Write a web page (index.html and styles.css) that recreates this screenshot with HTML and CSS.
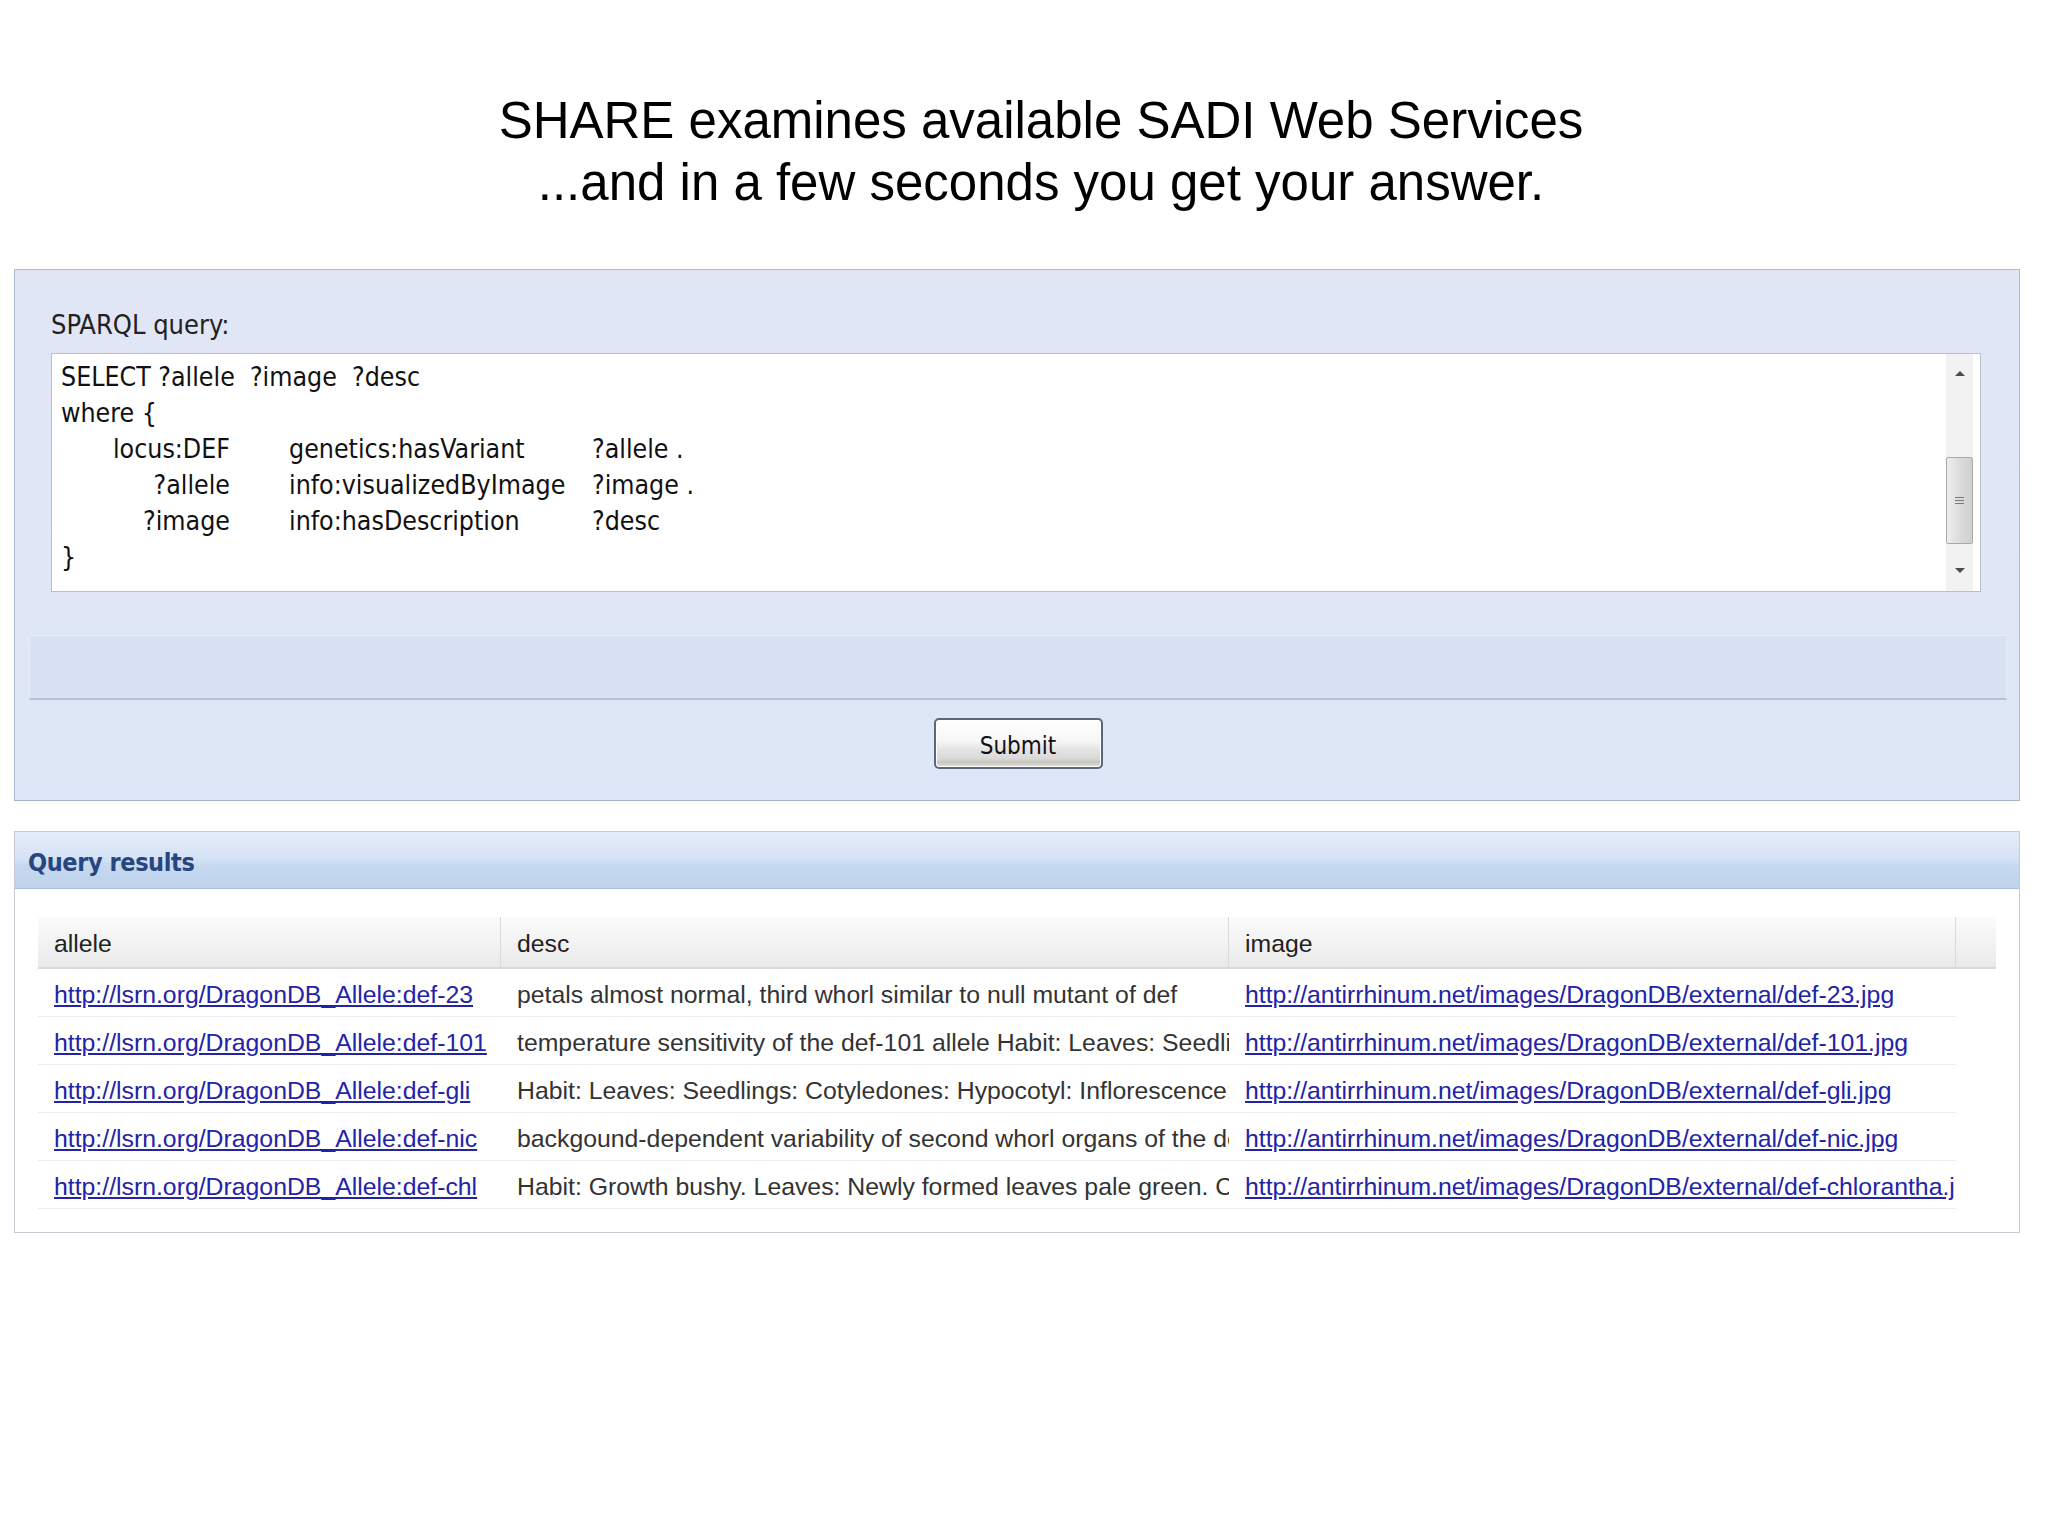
FILE: index.html
```html
<!DOCTYPE html>
<html lang="en">
<head>
<meta charset="utf-8">
<title>SHARE - SADI query</title>
<link rel="stylesheet" href="styles.css">
</head>
<body>
<div class="page">
  <h1 class="title">SHARE examines available SADI Web Services<br>...and in a few seconds you get your answer.</h1>

  <section class="query-panel">
    <div class="query-field">
      <div class="label">SPARQL query:</div>
      <div class="textarea">
        <div class="code">
          <div class="line">SELECT ?allele  ?image  ?desc</div>
          <div class="line">where {</div>
          <div class="triple"><span class="s">locus:DEF</span><span class="p">genetics:hasVariant</span><span class="o">?allele .</span></div>
          <div class="triple"><span class="s">?allele</span><span class="p">info:visualizedByImage</span><span class="o">?image .</span></div>
          <div class="triple"><span class="s">?image</span><span class="p">info:hasDescription</span><span class="o">?desc</span></div>
          <div class="line">}</div>
        </div>
        <div class="scrollbar">
          <div class="sb-btn"><span class="arrow-up"></span></div>
          <div class="sb-track-top"></div>
          <div class="sb-thumb"><span class="grip"></span><span class="grip"></span><span class="grip"></span></div>
          <div class="sb-track-bottom"></div>
          <div class="sb-btn sb-btn-down"><span class="arrow-down"></span></div>
        </div>
      </div>
    </div>
    <div class="band"></div>
    <div class="actions"><button class="submit" type="button">Submit</button></div>
  </section>

  <section class="results">
    <div class="results-header">Query results</div>
    <div class="results-body">
      <div class="grid">
        <div class="th">allele</div>
        <div class="th">desc</div>
        <div class="th">image</div>
        <div class="th th-spacer"></div>

        <div class="td"><a href="#">http://lsrn.org/DragonDB_Allele:def-23</a></div>
        <div class="td">petals almost normal, third whorl similar to null mutant of def</div>
        <div class="td"><a href="#">http://antirrhinum.net/images/DragonDB/external/def-23.jpg</a></div>
        <div class="td-spacer"></div>

        <div class="td"><a href="#">http://lsrn.org/DragonDB_Allele:def-101</a></div>
        <div class="td">temperature sensitivity of the def-101 allele Habit: Leaves: Seedlings: Cotyledones</div>
        <div class="td"><a href="#">http://antirrhinum.net/images/DragonDB/external/def-101.jpg</a></div>
        <div class="td-spacer"></div>

        <div class="td"><a href="#">http://lsrn.org/DragonDB_Allele:def-gli</a></div>
        <div class="td">Habit: Leaves: Seedlings: Cotyledones: Hypocotyl: Inflorescence: Flower</div>
        <div class="td"><a href="#">http://antirrhinum.net/images/DragonDB/external/def-gli.jpg</a></div>
        <div class="td-spacer"></div>

        <div class="td"><a href="#">http://lsrn.org/DragonDB_Allele:def-nic</a></div>
        <div class="td">backgound-dependent variability of second whorl organs of the def-nic allele</div>
        <div class="td"><a href="#">http://antirrhinum.net/images/DragonDB/external/def-nic.jpg</a></div>
        <div class="td-spacer"></div>

        <div class="td"><a href="#">http://lsrn.org/DragonDB_Allele:def-chl</a></div>
        <div class="td">Habit: Growth bushy. Leaves: Newly formed leaves pale green. Cotyledones</div>
        <div class="td"><a href="#">http://antirrhinum.net/images/DragonDB/external/def-chlorantha.jpg</a></div>
        <div class="td-spacer"></div>
      </div>
    </div>
  </section>
</div>
</body>
</html>
```

FILE: styles.css
```css
html, body {
  margin: 0;
  padding: 0;
  background: #ffffff;
}

.page {
  padding: 0 28px 0 14px;
}

.title {
  margin: 0;
  padding: 90px 0 0 48px;
  text-align: center;
  font-family: "Liberation Sans", Arial, sans-serif;
  font-weight: normal;
  font-size: 51px;
  line-height: 62px;
  color: #000000;
}

/* ---------- Query panel ---------- */
.query-panel {
  margin-top: 55px;
  border: 1px solid #aebbd3;
  border-bottom-color: #a3b1ca;
  background: linear-gradient(#e1e6f5, #dee7f7);
  padding: 39px 12px 31px 14px;
  font-family: "DejaVu Sans Condensed", "DejaVu Sans", sans-serif;
  font-stretch: condensed;
}

.query-field {
  margin: 0 26px 0 22px;
}

.label {
  font-size: 27px;
  line-height: 32px;
  color: #222222;
}

.textarea {
  margin-top: 12px;
  height: 237px;
  border: 1px solid #b9c0c9;
  background: #ffffff;
  display: flex;
}

.code {
  flex: 1;
  padding: 5px 0 0 9px;
  font-size: 26.5px;
  line-height: 36px;
  color: #111111;
}

.line {
  white-space: pre;
}

.triple {
  display: grid;
  grid-template-columns: 169px 362px auto;
  white-space: pre;
}

.triple .s {
  text-align: right;
}

.triple .p {
  padding-left: 59px;
}

/* scrollbar */
.scrollbar {
  width: 27px;
  margin-right: 7px;
  background: #f2f2f2;
  display: flex;
  flex-direction: column;
}

.sb-btn {
  height: 38px;
  display: flex;
  align-items: center;
  justify-content: center;
}

.sb-btn-down {
  height: 41px;
}

.arrow-up {
  width: 0;
  height: 0;
  border-left: 5px solid transparent;
  border-right: 5px solid transparent;
  border-bottom: 5px solid #4b4b4b;
}

.arrow-down {
  width: 0;
  height: 0;
  border-left: 5px solid transparent;
  border-right: 5px solid transparent;
  border-top: 5px solid #4b4b4b;
}

.sb-track-top {
  height: 65px;
}

.sb-track-bottom {
  height: 6px;
}

.sb-thumb {
  height: 85px;
  border: 1px solid #a9a9a9;
  border-radius: 2px;
  background: linear-gradient(90deg, #eeeeee, #dcdcdc 50%, #cfcfcf);
  display: flex;
  flex-direction: column;
  align-items: center;
  justify-content: center;
  gap: 2px;
}

.grip {
  display: block;
  width: 9px;
  height: 1px;
  background: #7a7a7a;
}

.band {
  margin-top: 43px;
  height: 62px;
  background: #d9e2f3;
  border-top: 1px solid #e8eef9;
  border-left: 1px solid #e4eaf6;
  border-right: 1px solid #e4eaf6;
  border-bottom: 2px solid #b3c3df;
}

.actions {
  margin-top: 18px;
  display: flex;
  justify-content: center;
}

.submit {
  width: 169px;
  height: 51px;
  border: 2px solid #59687d;
  border-radius: 5px;
  background: linear-gradient(#ffffff 0%, #f6f6f6 45%, #e6e6e6 60%, #d9d9d9 82%, #cbc6bc 90%, #e4e4e4 100%);
  font-family: "DejaVu Sans Condensed", "DejaVu Sans", sans-serif;
  font-stretch: condensed;
  font-size: 24px;
  color: #111111;
  padding: 4px 0 0 0;
  box-shadow: inset 0 0 0 1px #ffffff;
}

/* ---------- Results panel ---------- */
.results {
  margin-top: 30px;
  border: 1px solid #c4cbd5;
  background: #ffffff;
}

.results-header {
  height: 56px;
  border-bottom: 1px solid #a8bfdf;
  background: linear-gradient(#e4ecf9 0%, #d6e3f5 45%, #c6d8f0 60%, #bfd3ee 100%);
  font-family: "DejaVu Sans Condensed", "DejaVu Sans", sans-serif;
  font-stretch: condensed;
  font-weight: bold;
  font-size: 25px;
  line-height: 62px;
  color: #27467d;
  padding-left: 13px;
  letter-spacing: -0.4px;
}

.results-body {
  padding: 28px 23px 23px 23px;
}

.grid {
  display: grid;
  grid-template-columns: 463px 728px 727px 40px;
  grid-auto-rows: 48px;
  grid-template-rows: 52px;
  font-family: "Liberation Sans", Arial, sans-serif;
  font-size: 24.8px;
}

.th {
  background: linear-gradient(#fbfbfb, #f1f1f1 60%, #e9e9e9);
  border-bottom: 2px solid #d9d9d9;
  border-right: 1px solid #dadada;
  color: #222222;
  padding: 3px 0 0 16px;
  display: flex;
  align-items: center;
}

.th-spacer {
  border-right: none;
  padding-left: 0;
}

.td {
  border-bottom: 1px solid #ececec;
  color: #333333;
  padding: 4px 0 0 16px;
  display: flex;
  align-items: center;
  white-space: nowrap;
  overflow: hidden;
}

.td a {
  color: #2323a8;
  text-decoration: underline;
}

.td-spacer {
  background: #ffffff;
}
```
